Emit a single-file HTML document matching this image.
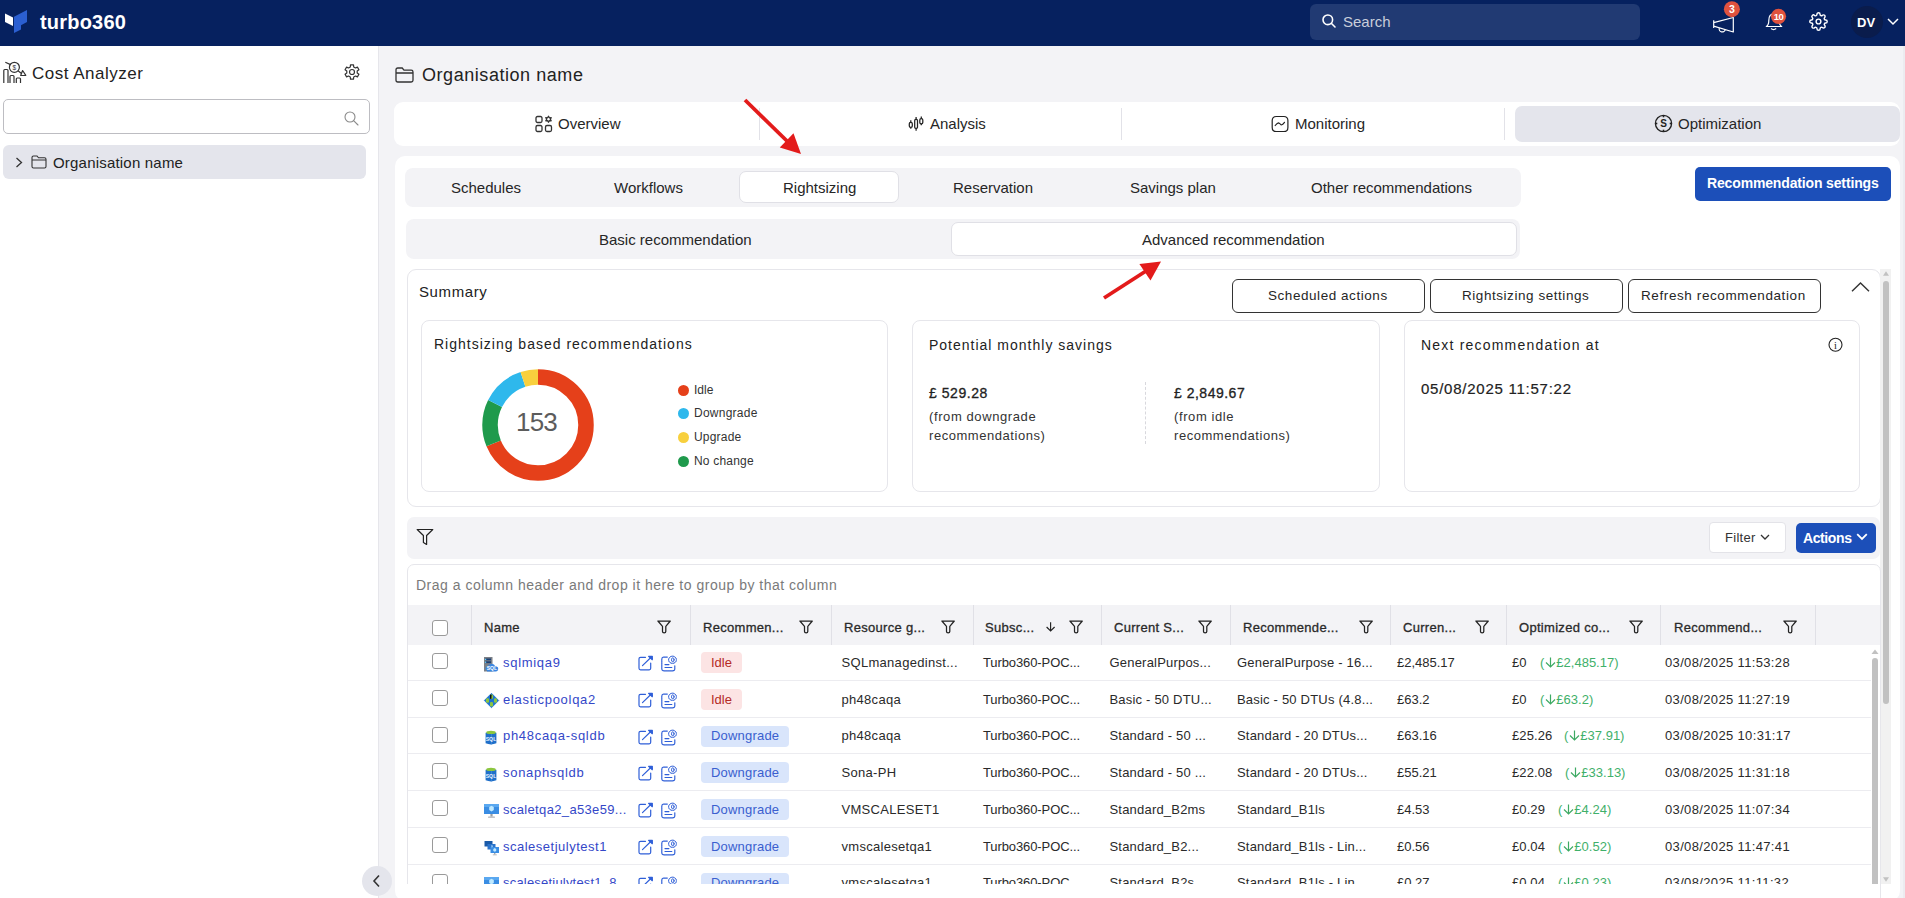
<!DOCTYPE html>
<html><head><meta charset="utf-8">
<style>
*{box-sizing:border-box;margin:0;padding:0}
html,body{width:1905px;height:898px;overflow:hidden}
body{font-family:"Liberation Sans",sans-serif;color:#262626;background:#f3f3f6;position:relative}
.a{position:absolute;white-space:nowrap}
.hdr{left:0;top:0;width:1905px;height:46px;background:#06215f}
.side{left:0;top:46px;width:379px;height:852px;background:#fff;border-right:1px solid #e6e6eb}
.tabs{left:394px;top:102px;width:1506px;height:44px;background:#fff;border-radius:9px}
.card{left:395px;top:156px;width:1505px;height:745px;background:#fff;border-radius:10px}
.sub{left:405px;top:168px;width:1116px;height:39px;background:#f3f3f6;border-radius:8px}
.t15{font-size:15px;line-height:18px}
.t14{font-size:14px;line-height:17px}
.t13{font-size:13px;line-height:16px}
.t12{font-size:12px;line-height:15px}
svg{position:absolute;overflow:visible}
.sb{-webkit-text-stroke:0.3px currentColor;letter-spacing:0.3px}
</style></head><body>

<!-- HEADER -->
<div class="a hdr"></div>
<svg style="left:5px;top:10px" width="23" height="24" viewBox="0 0 23 24">
 <polygon points="0,3.5 8,7.5 8,16 0,12" fill="#fff"/>
 <polygon points="9,8 22,0 22,14 16,18 16,23 9,27" fill="#2b5fd1" transform="scale(1,0.85)"/>
</svg>
<div class="a" style="left:40px;top:11px;font-size:20px;line-height:22px;font-weight:700;color:#fff;letter-spacing:0.2px">turbo360</div>

<div class="a" style="left:1310px;top:4px;width:330px;height:36px;background:#213a73;border-radius:6px"></div>
<svg style="left:1322px;top:14px" width="14" height="14" viewBox="0 0 14 14"><circle cx="5.8" cy="5.8" r="4.8" fill="none" stroke="#fff" stroke-width="1.6"/><line x1="9.3" y1="9.3" x2="13" y2="13" stroke="#fff" stroke-width="1.6" stroke-linecap="round"/></svg>
<div class="a t15" style="left:1343px;top:13px;color:#c9cedb">Search</div>

<!-- megaphone -->
<svg style="left:1700px;top:0" width="100" height="40" viewBox="0 0 100 40">
 <g fill="none" stroke="#fff" stroke-width="1.2" stroke-linejoin="round">
  <path d="M13.7 20.3 V27.9 M13.7 22.6 L33.3 17.5 V32 L13.7 26.2"/>
  <path d="M19.3 28 A3 3 0 0 0 25.3 29.6"/>
  <path d="M66.3 26.5 Q68.8 25 68.8 20.5 Q68.8 13.8 74 13.8 Q79.2 13.8 79.2 20.5 Q79.2 25 81.7 26.5 Z"/>
  <path d="M71 28.6 Q73.6 30.6 76.2 28.6"/>
 </g>
 <circle cx="31.9" cy="9.2" r="8" fill="#e0523e"/>
 <text x="31.9" y="13" font-size="10.5" font-weight="700" fill="#fff" text-anchor="middle" font-family="Liberation Sans">3</text>
 <circle cx="78.5" cy="16.3" r="7.6" fill="#e0523e"/>
 <text x="78.5" y="19.8" font-size="9.5" font-weight="700" fill="#fff" text-anchor="middle" font-family="Liberation Sans" letter-spacing="-0.6">10</text>
</svg>
<!-- gear -->
<svg style="left:1809px;top:12px" width="19" height="19" viewBox="0 0 24 24"><path fill="none" stroke="#fff" stroke-width="1.8" d="M12 15a3 3 0 1 0 0-6 3 3 0 0 0 0 6Z"/><path fill="none" stroke="#fff" stroke-width="1.8" d="M19.4 15a1.65 1.65 0 0 0 .33 1.82l.06.06a2 2 0 1 1-2.83 2.83l-.06-.06a1.65 1.65 0 0 0-1.82-.33 1.65 1.65 0 0 0-1 1.51V21a2 2 0 1 1-4 0v-.09A1.65 1.65 0 0 0 9 19.4a1.65 1.65 0 0 0-1.82.33l-.06.06a2 2 0 1 1-2.83-2.83l.06-.06A1.65 1.65 0 0 0 4.68 15a1.65 1.65 0 0 0-1.51-1H3a2 2 0 1 1 0-4h.09A1.65 1.65 0 0 0 4.6 9a1.65 1.65 0 0 0-.33-1.82l-.06-.06a2 2 0 1 1 2.83-2.83l.06.06A1.65 1.65 0 0 0 9 4.68a1.65 1.65 0 0 0 1-1.51V3a2 2 0 1 1 4 0v.09a1.65 1.65 0 0 0 1 1.51 1.65 1.65 0 0 0 1.82-.33l.06-.06a2 2 0 1 1 2.83 2.83l-.06.06A1.65 1.65 0 0 0 19.4 9a1.65 1.65 0 0 0 1.51 1H21a2 2 0 1 1 0 4h-.09a1.65 1.65 0 0 0-1.51 1Z"/></svg>
<div class="a" style="left:1851px;top:6px;width:32px;height:32px;border-radius:50%;background:#0a1c4c"></div>
<div class="a" style="left:1857px;top:15px;font-size:13px;line-height:15px;font-weight:700;color:#fff">DV</div>
<svg style="left:1887px;top:18px" width="12" height="7" viewBox="0 0 12 7"><polyline points="1,1 6,6 11,1" fill="none" stroke="#fff" stroke-width="1.5"/></svg>

<!-- SIDEBAR -->
<div class="a side"></div>
<!-- cost analyzer icon -->
<svg style="left:0;top:55px" width="30" height="35" viewBox="0 0 30 35">
 <g fill="none" stroke="#333" stroke-width="1.2">
  <path d="M3.8 28 V15.5 Q3.8 14.5 4.8 14.5 H7 Q8 14.5 8 15.5 V28"/>
  <path d="M10 28 V21.5 Q10 20.5 11 20.5 H13 Q14 20.5 14 21.5 V28"/>
  <path d="M16.3 28 V24 Q16.3 23 17.3 23 H19.5 Q20.5 23 20.5 24 V28"/>
  <circle cx="14.4" cy="12.3" r="5"/>
  <path d="M5.3 7.2 L10.6 9.6 M18 15.8 L21.5 18.5"/>
  <path d="M22.6 15.5 L25.8 20.3 L20.7 20.5 Z" stroke-linejoin="round"/>
 </g>
 <text x="14.4" y="14.6" font-size="6.5" text-anchor="middle" fill="#333" font-family="Liberation Sans">$</text>
</svg>
<div class="a" style="left:32px;top:64px;font-size:17px;line-height:20px;letter-spacing:0.5px;color:#222">Cost Analyzer</div>
<svg style="left:343.5px;top:64px" width="16" height="16" viewBox="0 0 16 16"><path d="M6.30 2.98 L6.48 0.86 L9.52 0.86 L9.70 2.98 L11.49 4.02 L13.42 3.12 L14.94 5.74 L13.20 6.97 L13.20 9.03 L14.94 10.26 L13.42 12.88 L11.49 11.98 L9.70 13.02 L9.52 15.14 L6.48 15.14 L6.30 13.02 L4.51 11.98 L2.58 12.88 L1.06 10.26 L2.80 9.03 L2.80 6.97 L1.06 5.74 L2.58 3.12 L4.51 4.02 Z" fill="none" stroke="#333" stroke-width="1.2" stroke-linejoin="round"/><circle cx="8" cy="8" r="2.5" fill="none" stroke="#333" stroke-width="1.2"/></svg>
<div class="a" style="left:3px;top:99px;width:367px;height:35px;border:1px solid #bdbdc2;border-radius:5px;background:#fff"></div>
<svg style="left:344px;top:111px" width="15" height="15" viewBox="0 0 15 15"><circle cx="6" cy="6" r="5" fill="none" stroke="#8a8a8a" stroke-width="1.1"/><line x1="9.6" y1="9.6" x2="14" y2="14" stroke="#8a8a8a" stroke-width="1.1" stroke-linecap="round"/></svg>
<div class="a" style="left:3px;top:145px;width:363px;height:34px;border-radius:6px;background:#e4e5ec"></div>
<svg style="left:15px;top:157px" width="8" height="11" viewBox="0 0 8 11"><polyline points="1.5,1 6.5,5.5 1.5,10" fill="none" stroke="#333" stroke-width="1.3"/></svg>
<svg style="left:31px;top:155px" width="16" height="14" viewBox="0 0 16 14"><path d="M1 2.5 Q1 1 2.5 1 H6 L7.5 2.8 H13.5 Q15 2.8 15 4.3 V11.5 Q15 13 13.5 13 H2.5 Q1 13 1 11.5 Z M1 5 H15" fill="none" stroke="#333" stroke-width="1.1"/></svg>
<div class="a" style="left:53px;top:154px;font-size:15px;line-height:17px;letter-spacing:0.2px;color:#222">Organisation name</div>
<!-- collapse button -->
<div class="a" style="left:362px;top:866px;width:30px;height:30px;border-radius:50%;background:#e4e5ec"></div>
<svg style="left:372px;top:874px" width="9" height="14" viewBox="0 0 9 14"><polyline points="7,1.5 2,7 7,12.5" fill="none" stroke="#333" stroke-width="1.6"/></svg>

<!-- MAIN -->
<svg style="left:395px;top:67px" width="19" height="16" viewBox="0 0 19 16"><path d="M1 2.8 Q1 1 2.8 1 H7.2 L9 3.2 H16.2 Q18 3.2 18 5 V13.2 Q18 15 16.2 15 H2.8 Q1 15 1 13.2 Z M1 6 H18" fill="none" stroke="#333" stroke-width="1.3"/></svg>
<div class="a" style="left:422px;top:65px;font-size:18px;line-height:20px;letter-spacing:0.55px;color:#222">Organisation name</div>

<div class="a tabs"></div>
<div class="a" style="left:759px;top:108px;width:1px;height:32px;background:#e2e2e8"></div>
<div class="a" style="left:1121px;top:108px;width:1px;height:32px;background:#e2e2e8"></div>
<div class="a" style="left:1504px;top:108px;width:1px;height:32px;background:#e2e2e8"></div>
<div class="a" style="left:1515px;top:106px;width:385px;height:36px;background:#e4e5ec;border-radius:7px"></div>
<!-- overview icon -->
<svg style="left:535px;top:115px" width="18" height="18" viewBox="0 0 18 18"><g fill="none" stroke="#333" stroke-width="1.3"><rect x="1" y="1.5" width="6" height="6" rx="1.5"/><rect x="1" y="10.5" width="6" height="6" rx="1.5"/><rect x="10.5" y="10.5" width="6" height="6" rx="1.5"/><path d="M13.5 1.2 L14.4 2.8 L16.2 2.6 L15.3 4.2 L16.2 5.8 L14.4 5.6 L13.5 7.2 L12.6 5.6 L10.8 5.8 L11.7 4.2 L10.8 2.6 L12.6 2.8 Z" stroke-linejoin="round"/></g></svg>
<div class="a t15" style="left:558px;top:115px;color:#262626">Overview</div>
<!-- analysis icon -->
<svg style="left:900px;top:108px" width="30" height="30" viewBox="0 0 30 30"><g fill="none" stroke="#222" stroke-width="1.25"><rect x="9.3" y="14.4" width="3" height="5" rx="1.4"/><path d="M10.8 12.2 V14.4 M10.8 19.4 V20.8"/><rect x="14.7" y="11.4" width="2.8" height="9" rx="1.1"/><path d="M16.1 9 V11.4 M16.1 20.4 V22.8"/><rect x="19.8" y="10.5" width="3" height="5.3" rx="1.4"/><path d="M21.3 8.4 V10.5 M21.3 15.8 V17.2"/></g></svg>
<div class="a t15" style="left:930px;top:115px;color:#262626">Analysis</div>
<!-- monitoring icon -->
<svg style="left:1271px;top:115px" width="18" height="18" viewBox="0 0 18 18"><g fill="none" stroke="#222" stroke-width="1.2" stroke-linecap="round" stroke-linejoin="round"><path d="M5.3 1.5 H12.8 Q16.9 1.5 16.9 5.6 V12.4 Q16.9 16.5 12.8 16.5 H5.3 Q1.2 16.5 1.2 12.4 V5.6 Q1.2 1.5 5.3 1.5 Z"/><path d="M4.2 10.5 Q6 8.2 7.4 7.9 Q8.6 8 10.2 10 Q11.8 9.6 13.5 7.3"/></g></svg>
<div class="a t15" style="left:1295px;top:115px;color:#262626">Monitoring</div>
<!-- optimization icon -->
<svg style="left:1653.5px;top:114.4px" width="19" height="19" viewBox="0 0 19 19"><circle cx="9.5" cy="9.5" r="8.1" fill="none" stroke="#222" stroke-width="1.35"/><g stroke="#222" stroke-width="1.6"><line x1="9.5" y1="1.5" x2="9.5" y2="3.3"/><line x1="9.5" y1="15.7" x2="9.5" y2="17.5"/><line x1="1.5" y1="9.5" x2="3.3" y2="9.5"/><line x1="15.7" y1="9.5" x2="17.5" y2="9.5"/></g><text x="9.5" y="13.4" font-size="10" font-weight="700" text-anchor="middle" fill="#222" font-family="Liberation Sans">S</text></svg>
<div class="a t15" style="left:1678px;top:115px;color:#262626">Optimization</div>

<div class="a card"></div>
<div class="a sub"></div>
<div class="a" style="left:739px;top:171px;width:160px;height:32px;background:#fff;border:1px solid #e0e0e6;border-radius:7px"></div>
<div class="a t15" style="left:451px;top:179px">Schedules</div>
<div class="a t15" style="left:614px;top:179px">Workflows</div>
<div class="a t15" style="left:783px;top:179px">Rightsizing</div>
<div class="a t15" style="left:953px;top:179px">Reservation</div>
<div class="a t15" style="left:1130px;top:179px">Savings plan</div>
<div class="a t15" style="left:1311px;top:179px">Other recommendations</div>

<div class="a" style="left:1695px;top:167px;width:196px;height:34px;background:#1c4fb9;border-radius:5px"></div>
<div class="a" style="left:1707px;top:175px;font-size:14px;line-height:17px;font-weight:700;color:#fff;letter-spacing:-0.15px">Recommendation settings</div>

<div class="a" style="left:406px;top:219px;width:1114px;height:40px;background:#f3f3f6;border-radius:8px"></div>
<div class="a" style="left:951px;top:222px;width:566px;height:34px;background:#fff;border:1px solid #e0e0e6;border-radius:7px"></div>
<div class="a t15" style="left:599px;top:231px">Basic recommendation</div>
<div class="a t15" style="left:1142px;top:231px">Advanced recommendation</div>


<!-- SUMMARY -->
<div class="a" style="left:407px;top:269px;width:1474px;height:238px;background:#fff;border:1px solid #e6e6eb;border-radius:9px"></div>
<div class="a" style="left:419px;top:283px;font-size:15px;line-height:18px;letter-spacing:0.6px;color:#222">Summary</div>
<div class="a" style="left:1232px;top:279px;width:193px;height:34px;border:1px solid #333;border-radius:6px;background:#fff"></div>
<div class="a" style="left:1430px;top:279px;width:193px;height:34px;border:1px solid #333;border-radius:6px;background:#fff"></div>
<div class="a" style="left:1628px;top:279px;width:193px;height:34px;border:1px solid #333;border-radius:6px;background:#fff"></div>
<div class="a" style="left:1268px;top:288px;font-size:13.5px;line-height:16px;letter-spacing:0.55px">Scheduled actions</div>
<div class="a" style="left:1462px;top:288px;font-size:13.5px;line-height:16px;letter-spacing:0.55px">Rightsizing settings</div>
<div class="a" style="left:1641px;top:288px;font-size:13.5px;line-height:16px;letter-spacing:0.6px">Refresh recommendation</div>
<svg style="left:1851px;top:282px" width="19" height="10" viewBox="0 0 19 10"><polyline points="1,9.2 9.5,1 18,9.2" fill="none" stroke="#333" stroke-width="1.4"/></svg>

<div class="a" style="left:421px;top:320px;width:467px;height:172px;border:1px solid #e6e6eb;border-radius:8px"></div>
<div class="a t14" style="left:434px;top:336px;letter-spacing:1px;color:#222">Rightsizing based recommendations</div>
<svg style="left:482px;top:369px" width="112" height="112" viewBox="0 0 112 112">
 <g transform="translate(56,56) rotate(-90)" fill="none" stroke-width="15.5">
  <circle r="48" stroke="#e5401a" stroke-dasharray="207.0 301.6" stroke-dashoffset="0"/>
  <circle r="48" stroke="#1f9a4c" stroke-dasharray="41.1 301.6" stroke-dashoffset="-207.0"/>
  <circle r="48" stroke="#2eb8ec" stroke-dasharray="37.7 301.6" stroke-dashoffset="-248.1"/>
  <circle r="48" stroke="#f8d03e" stroke-dasharray="15.8 301.6" stroke-dashoffset="-285.8"/>
 </g>
</svg>
<div class="a" style="left:516px;top:408px;font-size:26px;line-height:28px;color:#5c5c5c;letter-spacing:-0.8px">153</div>
<div class="a" style="left:678px;top:385px;width:11px;height:11px;border-radius:50%;background:#e5401a"></div>
<div class="a" style="left:678px;top:408px;width:11px;height:11px;border-radius:50%;background:#2eb8ec"></div>
<div class="a" style="left:678px;top:432px;width:11px;height:11px;border-radius:50%;background:#f8d03e"></div>
<div class="a" style="left:678px;top:456px;width:11px;height:11px;border-radius:50%;background:#1f9a4c"></div>
<div class="a t12" style="left:694px;top:383px;color:#333">Idle</div>
<div class="a t12" style="left:694px;top:406px;color:#333;letter-spacing:0.25px">Downgrade</div>
<div class="a t12" style="left:694px;top:430px;color:#333;letter-spacing:0.2px">Upgrade</div>
<div class="a t12" style="left:694px;top:454px;color:#333;letter-spacing:0.2px">No change</div>

<div class="a" style="left:912px;top:320px;width:468px;height:172px;border:1px solid #e6e6eb;border-radius:8px"></div>
<div class="a t14" style="left:929px;top:337px;letter-spacing:1px;color:#222">Potential monthly savings</div>
<div class="a" style="left:929px;top:385px;font-size:14px;line-height:16px;-webkit-text-stroke:0.3px #222;letter-spacing:0.55px;color:#222">£ 529.28</div>
<div class="a t13" style="left:929px;top:409px;letter-spacing:0.6px;color:#333">(from downgrade</div>
<div class="a t13" style="left:929px;top:428px;letter-spacing:0.55px;color:#333">recommendations)</div>
<div class="a" style="left:1145px;top:382px;width:0;height:62px;border-left:1px dashed #d8d8dd"></div>
<div class="a" style="left:1174px;top:385px;font-size:14px;line-height:16px;-webkit-text-stroke:0.3px #222;letter-spacing:0.5px;color:#222">£ 2,849.67</div>
<div class="a t13" style="left:1174px;top:409px;letter-spacing:0.6px;color:#333">(from idle</div>
<div class="a t13" style="left:1174px;top:428px;letter-spacing:0.55px;color:#333">recommendations)</div>

<div class="a" style="left:1404px;top:320px;width:456px;height:172px;border:1px solid #e6e6eb;border-radius:8px"></div>
<div class="a t14" style="left:1421px;top:337px;letter-spacing:1.2px;color:#222">Next recommendation at</div>
<svg style="left:1828px;top:338px" width="15" height="15" viewBox="0 0 15 15"><circle cx="7.5" cy="6.8" r="6.5" fill="none" stroke="#222" stroke-width="1.1"/><text x="7.5" y="10.6" font-size="10.5" text-anchor="middle" fill="#222" font-family="Liberation Serif">i</text></svg>
<div class="a" style="left:1421px;top:380px;font-size:15px;line-height:17px;-webkit-text-stroke:0.2px #222;letter-spacing:0.75px;color:#222">05/08/2025 11:57:22</div>

<!-- outer scrollbar -->
<div class="a" style="left:1880px;top:269px;width:11px;height:615px;background:#f1f1f1"></div>
<div class="a" style="left:1883px;top:281px;width:6px;height:423px;background:#c1c1c1;border-radius:3px"></div>
<svg style="left:1883px;top:271px" width="6" height="5" viewBox="0 0 6 5"><polygon points="3,0.3 6,4.7 0,4.7" fill="#c1c1c1"/></svg>
<svg style="left:1883px;top:877px" width="6" height="5" viewBox="0 0 6 5"><polygon points="0,0.3 6,0.3 3,4.7" fill="#c1c1c1"/></svg>
<div class="a" style="left:1903px;top:46px;width:2px;height:852px;background:#ececf0"></div>
<!-- TABLE -->
<div class="a" style="left:407px;top:517px;width:1473px;height:42px;background:#f3f3f6;border-radius:7px"></div>
<svg style="left:416px;top:528px" width="18" height="18" viewBox="0 0 18 18"><path d="M1.2 1.5 H16.8 L10.6 7.5 V16.5 L7.4 14.5 V7.5 Z" fill="none" stroke="#222" stroke-width="1.2" stroke-linejoin="round"/></svg>
<div class="a" style="left:1709px;top:522px;width:77px;height:31px;background:#fff;border:1px solid #e3e3e8;border-radius:4px"></div>
<div class="a t13" style="left:1725px;top:530px;color:#333;letter-spacing:0.3px">Filter</div>
<svg style="left:1760px;top:534px" width="10" height="7" viewBox="0 0 10 7"><polyline points="1,1 5,5 9,1" fill="none" stroke="#333" stroke-width="1.3"/></svg>
<div class="a" style="left:1796px;top:523px;width:80px;height:30px;background:#1c4fb9;border-radius:5px"></div>
<div class="a" style="left:1803px;top:530px;font-size:14px;line-height:16px;font-weight:700;color:#fff;letter-spacing:-0.4px">Actions</div>
<svg style="left:1856px;top:533px" width="12" height="8" viewBox="0 0 12 8"><polyline points="1.2,1.2 6,6 10.8,1.2" fill="none" stroke="#fff" stroke-width="1.8"/></svg>
<div class="a" style="left:407px;top:564px;width:1474px;height:340px;border:1px solid #e6e6eb;border-radius:7px;background:#fff;overflow:hidden">
<div class="a t14" style="left:8px;top:12px;color:#7a7a7a;letter-spacing:0.5px">Drag a column header and drop it here to group by that column</div>
</div>
<div class="a" style="left:408px;top:605px;width:1472px;height:40px;background:#f3f3f6"></div>
<div class="a" style="left:471px;top:605px;width:1px;height:40px;background:#e0e0e6"></div>
<div class="a" style="left:690px;top:605px;width:1px;height:40px;background:#e0e0e6"></div>
<div class="a" style="left:831px;top:605px;width:1px;height:40px;background:#e0e0e6"></div>
<div class="a" style="left:973px;top:605px;width:1px;height:40px;background:#e0e0e6"></div>
<div class="a" style="left:1101px;top:605px;width:1px;height:40px;background:#e0e0e6"></div>
<div class="a" style="left:1230px;top:605px;width:1px;height:40px;background:#e0e0e6"></div>
<div class="a" style="left:1390px;top:605px;width:1px;height:40px;background:#e0e0e6"></div>
<div class="a" style="left:1506px;top:605px;width:1px;height:40px;background:#e0e0e6"></div>
<div class="a" style="left:1660px;top:605px;width:1px;height:40px;background:#e0e0e6"></div>
<div class="a" style="left:1815px;top:605px;width:1px;height:40px;background:#e0e0e6"></div>
<div class="a" style="left:432px;top:620px;width:16px;height:16px;border:1px solid #9a9a9a;border-radius:3px;background:#fff"></div>
<div class="a sb" style="left:484px;top:620px;font-size:13px;line-height:16px;color:#2a2a2a">Name</div>
<svg style="left:657px;top:620px" width="14" height="14" viewBox="0 0 14 14"><path d="M0.9 1 H13.3 L8.8 6.4 V11.6 Q8.8 12.9 7.15 12.9 Q5.5 12.9 5.5 11.6 V6.4 Z" fill="none" stroke="#222" stroke-width="1.25" stroke-linejoin="round"/></svg>
<div class="a sb" style="left:703px;top:620px;font-size:13px;line-height:16px;color:#2a2a2a">Recommen...</div>
<svg style="left:799px;top:620px" width="14" height="14" viewBox="0 0 14 14"><path d="M0.9 1 H13.3 L8.8 6.4 V11.6 Q8.8 12.9 7.15 12.9 Q5.5 12.9 5.5 11.6 V6.4 Z" fill="none" stroke="#222" stroke-width="1.25" stroke-linejoin="round"/></svg>
<div class="a sb" style="left:844px;top:620px;font-size:13px;line-height:16px;color:#2a2a2a">Resource g...</div>
<svg style="left:941px;top:620px" width="14" height="14" viewBox="0 0 14 14"><path d="M0.9 1 H13.3 L8.8 6.4 V11.6 Q8.8 12.9 7.15 12.9 Q5.5 12.9 5.5 11.6 V6.4 Z" fill="none" stroke="#222" stroke-width="1.25" stroke-linejoin="round"/></svg>
<div class="a sb" style="left:985px;top:620px;font-size:13px;line-height:16px;color:#2a2a2a">Subsc...</div>
<svg style="left:1069px;top:620px" width="14" height="14" viewBox="0 0 14 14"><path d="M0.9 1 H13.3 L8.8 6.4 V11.6 Q8.8 12.9 7.15 12.9 Q5.5 12.9 5.5 11.6 V6.4 Z" fill="none" stroke="#222" stroke-width="1.25" stroke-linejoin="round"/></svg>
<div class="a sb" style="left:1114px;top:620px;font-size:13px;line-height:16px;color:#2a2a2a">Current S...</div>
<svg style="left:1198px;top:620px" width="14" height="14" viewBox="0 0 14 14"><path d="M0.9 1 H13.3 L8.8 6.4 V11.6 Q8.8 12.9 7.15 12.9 Q5.5 12.9 5.5 11.6 V6.4 Z" fill="none" stroke="#222" stroke-width="1.25" stroke-linejoin="round"/></svg>
<div class="a sb" style="left:1243px;top:620px;font-size:13px;line-height:16px;color:#2a2a2a">Recommende...</div>
<svg style="left:1359px;top:620px" width="14" height="14" viewBox="0 0 14 14"><path d="M0.9 1 H13.3 L8.8 6.4 V11.6 Q8.8 12.9 7.15 12.9 Q5.5 12.9 5.5 11.6 V6.4 Z" fill="none" stroke="#222" stroke-width="1.25" stroke-linejoin="round"/></svg>
<div class="a sb" style="left:1403px;top:620px;font-size:13px;line-height:16px;color:#2a2a2a">Curren...</div>
<svg style="left:1475px;top:620px" width="14" height="14" viewBox="0 0 14 14"><path d="M0.9 1 H13.3 L8.8 6.4 V11.6 Q8.8 12.9 7.15 12.9 Q5.5 12.9 5.5 11.6 V6.4 Z" fill="none" stroke="#222" stroke-width="1.25" stroke-linejoin="round"/></svg>
<div class="a sb" style="left:1519px;top:620px;font-size:13px;line-height:16px;color:#2a2a2a">Optimized co...</div>
<svg style="left:1629px;top:620px" width="14" height="14" viewBox="0 0 14 14"><path d="M0.9 1 H13.3 L8.8 6.4 V11.6 Q8.8 12.9 7.15 12.9 Q5.5 12.9 5.5 11.6 V6.4 Z" fill="none" stroke="#222" stroke-width="1.25" stroke-linejoin="round"/></svg>
<div class="a sb" style="left:1674px;top:620px;font-size:13px;line-height:16px;color:#2a2a2a">Recommend...</div>
<svg style="left:1783px;top:620px" width="14" height="14" viewBox="0 0 14 14"><path d="M0.9 1 H13.3 L8.8 6.4 V11.6 Q8.8 12.9 7.15 12.9 Q5.5 12.9 5.5 11.6 V6.4 Z" fill="none" stroke="#222" stroke-width="1.25" stroke-linejoin="round"/></svg>
<svg style="left:1046px;top:622px" width="10" height="10" viewBox="0 0 10 10"><path d="M4.6 0.3 V9 M0.6 5 L4.6 9 L8.6 5" fill="none" stroke="#222" stroke-width="1.15"/></svg>
<div class="a" style="left:408px;top:645px;width:1463px;height:239px;overflow:hidden">
<div class="a" style="left:0;top:-0.9px;width:1463px;height:36.8px;border-bottom:1px solid #ececf0"></div>
<div class="a" style="left:24px;top:8.1px;width:16px;height:16px;border:1px solid #9a9a9a;border-radius:3px;background:#fff"></div>
<svg style="left:76px;top:11.6px" width="15" height="15" viewBox="0 0 15 15"><rect x="0" y="0" width="8.5" height="14.5" fill="#7b8087"/><rect x="1.5" y="1.5" width="5.5" height="1.8" fill="#1d3f73"/><rect x="1.5" y="4.3" width="5.5" height="1.8" fill="#1d3f73"/><circle cx="1.6" cy="2.4" r="0.7" fill="#5fd0ff"/><circle cx="1.6" cy="5.2" r="0.7" fill="#5fd0ff"/><path d="M3 13.5 Q1.5 13.5 1.5 11.6 Q1.5 9.6 3.6 9.4 Q4.6 6.8 7.6 6.8 Q10.6 6.8 11.2 9.3 Q14.2 9.5 14.2 11.6 Q14.2 14.5 11.8 14.5 H3 Z" fill="#3a86e0"/><text x="7.8" y="13.3" font-size="5" font-weight="700" fill="#fff" text-anchor="middle" font-family="Liberation Sans">SQL</text></svg>
<div class="a t13" style="left:95px;top:9.7px;color:#3447c8;letter-spacing:0.7px">sqlmiqa9</div>
<svg style="left:226px;top:7.1px" width="46" height="23" viewBox="0 0 46 23"><g fill="none" stroke="#2f5fd8" stroke-width="1.2" stroke-linecap="round" stroke-linejoin="round"><path d="M11.5 5.3 H6.5 Q5 5.3 5 6.8 V16.3 Q5 17.8 6.5 17.8 H15.2 Q16.7 17.8 16.7 16.3 V11.1"/><path d="M8.5 13.6 L17.6 4.8"/><path d="M14.6 4.3 H18.3 V7.7 Z" fill="#2f5fd8"/><path d="M33.3 5.1 H30 Q27.8 5.1 27.8 7.3 V16.6 Q27.8 18.8 30 18.8 H38.6 Q40.8 18.8 40.8 16.6 V13.8" stroke-dasharray="1.6 0.5"/><path d="M31 12.6 H34.9 M31 15.5 H37.8"/><ellipse cx="38.5" cy="7.8" rx="3.9" ry="3.6" stroke-width="1" stroke-dasharray="1.2 0.5"/><ellipse cx="38.8" cy="7.8" rx="1.3" ry="2" stroke-width="1"/></g></svg>
<div class="a" style="left:293px;top:7.1px;width:41px;height:21px;background:#fce4e4;border-radius:4px"></div>
<div class="a t13" style="left:303px;top:9.7px;color:#b52a25">Idle</div>
<div class="a t13" style="left:433.5px;top:9.7px;color:#2a2a2a;letter-spacing:0.3px">SQLmanagedinst...</div>
<div class="a t13" style="left:575.0px;top:9.7px;color:#2a2a2a;letter-spacing:-0.1px">Turbo360-POC...</div>
<div class="a t13" style="left:701.5px;top:9.7px;color:#2a2a2a;letter-spacing:0.2px">GeneralPurpos...</div>
<div class="a t13" style="left:829.0px;top:9.7px;color:#2a2a2a;letter-spacing:0.2px">GeneralPurpose - 16...</div>
<div class="a t13" style="left:989.0px;top:9.7px;color:#2a2a2a;letter-spacing:0px">£2,485.17</div>
<div class="a t13" style="left:1104.0px;top:9.7px;color:#2a2a2a;letter-spacing:0.1px">£0</div>
<div class="a t13" style="left:1257.0px;top:9.7px;color:#2a2a2a;letter-spacing:0.35px">03/08/2025 11:53:28</div>
<div class="a t13" style="left:1132px;top:9.7px;color:#3fb06a;letter-spacing:0px">(<svg style="position:relative;display:inline-block;vertical-align:-1px;margin:0 0.5px" width="11" height="11" viewBox="0 0 11 11"><path d="M5.5 0.5 V10 M1 5.5 L5.5 10 L10 5.5" fill="none" stroke="#3daa63" stroke-width="1.2"/></svg>£2,485.17)</div>
<div class="a" style="left:0;top:35.9px;width:1463px;height:36.8px;border-bottom:1px solid #ececf0"></div>
<div class="a" style="left:24px;top:44.9px;width:16px;height:16px;border:1px solid #9a9a9a;border-radius:3px;background:#fff"></div>
<svg style="left:76px;top:48.4px" width="15" height="15" viewBox="0 0 15 15"><polygon points="7.5,0.3 14.7,7.5 7.5,14.7 0.3,7.5" fill="#1f74cf" stroke="#1f74cf" stroke-width="0.8" stroke-linejoin="round"/><rect x="6" y="1.6" width="3" height="4.4" rx="1.2" fill="#8cc63f"/><rect x="6" y="1.6" width="1.5" height="4.4" rx="0.7" fill="#111"/><rect x="2" y="5.3" width="3" height="4.4" rx="1.2" fill="#8cc63f"/><rect x="10" y="5.3" width="3" height="4.4" rx="1.2" fill="#8cc63f"/><rect x="6" y="9.1" width="3" height="4.4" rx="1.2" fill="#8cc63f"/></svg>
<div class="a t13" style="left:95px;top:46.5px;color:#3447c8;letter-spacing:0.7px">elasticpoolqa2</div>
<svg style="left:226px;top:43.9px" width="46" height="23" viewBox="0 0 46 23"><g fill="none" stroke="#2f5fd8" stroke-width="1.2" stroke-linecap="round" stroke-linejoin="round"><path d="M11.5 5.3 H6.5 Q5 5.3 5 6.8 V16.3 Q5 17.8 6.5 17.8 H15.2 Q16.7 17.8 16.7 16.3 V11.1"/><path d="M8.5 13.6 L17.6 4.8"/><path d="M14.6 4.3 H18.3 V7.7 Z" fill="#2f5fd8"/><path d="M33.3 5.1 H30 Q27.8 5.1 27.8 7.3 V16.6 Q27.8 18.8 30 18.8 H38.6 Q40.8 18.8 40.8 16.6 V13.8" stroke-dasharray="1.6 0.5"/><path d="M31 12.6 H34.9 M31 15.5 H37.8"/><ellipse cx="38.5" cy="7.8" rx="3.9" ry="3.6" stroke-width="1" stroke-dasharray="1.2 0.5"/><ellipse cx="38.8" cy="7.8" rx="1.3" ry="2" stroke-width="1"/></g></svg>
<div class="a" style="left:293px;top:43.9px;width:41px;height:21px;background:#fce4e4;border-radius:4px"></div>
<div class="a t13" style="left:303px;top:46.5px;color:#b52a25">Idle</div>
<div class="a t13" style="left:433.5px;top:46.5px;color:#2a2a2a;letter-spacing:0.3px">ph48caqa</div>
<div class="a t13" style="left:575.0px;top:46.5px;color:#2a2a2a;letter-spacing:-0.1px">Turbo360-POC...</div>
<div class="a t13" style="left:701.5px;top:46.5px;color:#2a2a2a;letter-spacing:0.2px">Basic - 50 DTU...</div>
<div class="a t13" style="left:829.0px;top:46.5px;color:#2a2a2a;letter-spacing:0.2px">Basic - 50 DTUs (4.8...</div>
<div class="a t13" style="left:989.0px;top:46.5px;color:#2a2a2a;letter-spacing:0px">£63.2</div>
<div class="a t13" style="left:1104.0px;top:46.5px;color:#2a2a2a;letter-spacing:0.1px">£0</div>
<div class="a t13" style="left:1257.0px;top:46.5px;color:#2a2a2a;letter-spacing:0.35px">03/08/2025 11:27:19</div>
<div class="a t13" style="left:1132px;top:46.5px;color:#3fb06a;letter-spacing:0px">(<svg style="position:relative;display:inline-block;vertical-align:-1px;margin:0 0.5px" width="11" height="11" viewBox="0 0 11 11"><path d="M5.5 0.5 V10 M1 5.5 L5.5 10 L10 5.5" fill="none" stroke="#3daa63" stroke-width="1.2"/></svg>£63.2)</div>
<div class="a" style="left:0;top:72.7px;width:1463px;height:36.8px;border-bottom:1px solid #ececf0"></div>
<div class="a" style="left:24px;top:81.7px;width:16px;height:16px;border:1px solid #9a9a9a;border-radius:3px;background:#fff"></div>
<svg style="left:76px;top:85.2px" width="15" height="15" viewBox="0 0 15 15"><path d="M1.6 2.8 V13.3 Q7 15.6 12.4 13.3 V2.8 Z" fill="#1f6fc9"/><rect x="7" y="3" width="0.6" height="11.5" fill="#4b92dc"/><ellipse cx="7" cy="2.4" rx="4.8" ry="1.6" fill="#8cc63f"/><text x="7" y="10.5" font-size="5.2" font-weight="700" fill="#e8f2ff" text-anchor="middle" font-family="Liberation Sans">SQL</text></svg>
<div class="a t13" style="left:95px;top:83.3px;color:#3447c8;letter-spacing:0.7px">ph48caqa-sqldb</div>
<svg style="left:226px;top:80.7px" width="46" height="23" viewBox="0 0 46 23"><g fill="none" stroke="#2f5fd8" stroke-width="1.2" stroke-linecap="round" stroke-linejoin="round"><path d="M11.5 5.3 H6.5 Q5 5.3 5 6.8 V16.3 Q5 17.8 6.5 17.8 H15.2 Q16.7 17.8 16.7 16.3 V11.1"/><path d="M8.5 13.6 L17.6 4.8"/><path d="M14.6 4.3 H18.3 V7.7 Z" fill="#2f5fd8"/><path d="M33.3 5.1 H30 Q27.8 5.1 27.8 7.3 V16.6 Q27.8 18.8 30 18.8 H38.6 Q40.8 18.8 40.8 16.6 V13.8" stroke-dasharray="1.6 0.5"/><path d="M31 12.6 H34.9 M31 15.5 H37.8"/><ellipse cx="38.5" cy="7.8" rx="3.9" ry="3.6" stroke-width="1" stroke-dasharray="1.2 0.5"/><ellipse cx="38.8" cy="7.8" rx="1.3" ry="2" stroke-width="1"/></g></svg>
<div class="a" style="left:293px;top:80.7px;width:88px;height:21px;background:#d9e5fb;border-radius:4px"></div>
<div class="a t13" style="left:303px;top:83.3px;color:#3b5fcf;letter-spacing:0.2px">Downgrade</div>
<div class="a t13" style="left:433.5px;top:83.3px;color:#2a2a2a;letter-spacing:0.3px">ph48caqa</div>
<div class="a t13" style="left:575.0px;top:83.3px;color:#2a2a2a;letter-spacing:-0.1px">Turbo360-POC...</div>
<div class="a t13" style="left:701.5px;top:83.3px;color:#2a2a2a;letter-spacing:0.2px">Standard - 50 ...</div>
<div class="a t13" style="left:829.0px;top:83.3px;color:#2a2a2a;letter-spacing:0.2px">Standard - 20 DTUs...</div>
<div class="a t13" style="left:989.0px;top:83.3px;color:#2a2a2a;letter-spacing:0px">£63.16</div>
<div class="a t13" style="left:1104.0px;top:83.3px;color:#2a2a2a;letter-spacing:0.1px">£25.26</div>
<div class="a t13" style="left:1257.0px;top:83.3px;color:#2a2a2a;letter-spacing:0.35px">03/08/2025 10:31:17</div>
<div class="a t13" style="left:1156px;top:83.3px;color:#3fb06a;letter-spacing:0px">(<svg style="position:relative;display:inline-block;vertical-align:-1px;margin:0 0.5px" width="11" height="11" viewBox="0 0 11 11"><path d="M5.5 0.5 V10 M1 5.5 L5.5 10 L10 5.5" fill="none" stroke="#3daa63" stroke-width="1.2"/></svg>£37.91)</div>
<div class="a" style="left:0;top:109.4px;width:1463px;height:36.8px;border-bottom:1px solid #ececf0"></div>
<div class="a" style="left:24px;top:118.4px;width:16px;height:16px;border:1px solid #9a9a9a;border-radius:3px;background:#fff"></div>
<svg style="left:76px;top:121.9px" width="15" height="15" viewBox="0 0 15 15"><path d="M1.6 2.8 V13.3 Q7 15.6 12.4 13.3 V2.8 Z" fill="#1f6fc9"/><rect x="7" y="3" width="0.6" height="11.5" fill="#4b92dc"/><ellipse cx="7" cy="2.4" rx="4.8" ry="1.6" fill="#8cc63f"/><text x="7" y="10.5" font-size="5.2" font-weight="700" fill="#e8f2ff" text-anchor="middle" font-family="Liberation Sans">SQL</text></svg>
<div class="a t13" style="left:95px;top:120.0px;color:#3447c8;letter-spacing:0.7px">sonaphsqldb</div>
<svg style="left:226px;top:117.4px" width="46" height="23" viewBox="0 0 46 23"><g fill="none" stroke="#2f5fd8" stroke-width="1.2" stroke-linecap="round" stroke-linejoin="round"><path d="M11.5 5.3 H6.5 Q5 5.3 5 6.8 V16.3 Q5 17.8 6.5 17.8 H15.2 Q16.7 17.8 16.7 16.3 V11.1"/><path d="M8.5 13.6 L17.6 4.8"/><path d="M14.6 4.3 H18.3 V7.7 Z" fill="#2f5fd8"/><path d="M33.3 5.1 H30 Q27.8 5.1 27.8 7.3 V16.6 Q27.8 18.8 30 18.8 H38.6 Q40.8 18.8 40.8 16.6 V13.8" stroke-dasharray="1.6 0.5"/><path d="M31 12.6 H34.9 M31 15.5 H37.8"/><ellipse cx="38.5" cy="7.8" rx="3.9" ry="3.6" stroke-width="1" stroke-dasharray="1.2 0.5"/><ellipse cx="38.8" cy="7.8" rx="1.3" ry="2" stroke-width="1"/></g></svg>
<div class="a" style="left:293px;top:117.4px;width:88px;height:21px;background:#d9e5fb;border-radius:4px"></div>
<div class="a t13" style="left:303px;top:120.0px;color:#3b5fcf;letter-spacing:0.2px">Downgrade</div>
<div class="a t13" style="left:433.5px;top:120.0px;color:#2a2a2a;letter-spacing:0.3px">Sona-PH</div>
<div class="a t13" style="left:575.0px;top:120.0px;color:#2a2a2a;letter-spacing:-0.1px">Turbo360-POC...</div>
<div class="a t13" style="left:701.5px;top:120.0px;color:#2a2a2a;letter-spacing:0.2px">Standard - 50 ...</div>
<div class="a t13" style="left:829.0px;top:120.0px;color:#2a2a2a;letter-spacing:0.2px">Standard - 20 DTUs...</div>
<div class="a t13" style="left:989.0px;top:120.0px;color:#2a2a2a;letter-spacing:0px">£55.21</div>
<div class="a t13" style="left:1104.0px;top:120.0px;color:#2a2a2a;letter-spacing:0.1px">£22.08</div>
<div class="a t13" style="left:1257.0px;top:120.0px;color:#2a2a2a;letter-spacing:0.35px">03/08/2025 11:31:18</div>
<div class="a t13" style="left:1157px;top:120.0px;color:#3fb06a;letter-spacing:0px">(<svg style="position:relative;display:inline-block;vertical-align:-1px;margin:0 0.5px" width="11" height="11" viewBox="0 0 11 11"><path d="M5.5 0.5 V10 M1 5.5 L5.5 10 L10 5.5" fill="none" stroke="#3daa63" stroke-width="1.2"/></svg>£33.13)</div>
<div class="a" style="left:0;top:146.2px;width:1463px;height:36.8px;border-bottom:1px solid #ececf0"></div>
<div class="a" style="left:24px;top:155.2px;width:16px;height:16px;border:1px solid #9a9a9a;border-radius:3px;background:#fff"></div>
<svg style="left:76px;top:158.7px" width="15" height="15" viewBox="0 0 15 15"><rect x="0" y="0" width="15" height="10" fill="#3a8de3"/><rect x="0" y="0" width="15" height="3" fill="#5aa8f0"/><polygon points="7.5,1.8 9.8,3.1 9.8,6.1 7.5,7.4 5.2,6.1 5.2,3.1" fill="#bfe9ff"/><rect x="6.4" y="10" width="2.2" height="2.6" fill="#9a9ea3"/><rect x="4" y="12.6" width="7" height="1.2" rx="0.6" fill="#b0b3b8"/></svg>
<div class="a t13" style="left:95px;top:156.8px;color:#3447c8;letter-spacing:0.35px">scaletqa2_a53e59...</div>
<svg style="left:226px;top:154.2px" width="46" height="23" viewBox="0 0 46 23"><g fill="none" stroke="#2f5fd8" stroke-width="1.2" stroke-linecap="round" stroke-linejoin="round"><path d="M11.5 5.3 H6.5 Q5 5.3 5 6.8 V16.3 Q5 17.8 6.5 17.8 H15.2 Q16.7 17.8 16.7 16.3 V11.1"/><path d="M8.5 13.6 L17.6 4.8"/><path d="M14.6 4.3 H18.3 V7.7 Z" fill="#2f5fd8"/><path d="M33.3 5.1 H30 Q27.8 5.1 27.8 7.3 V16.6 Q27.8 18.8 30 18.8 H38.6 Q40.8 18.8 40.8 16.6 V13.8" stroke-dasharray="1.6 0.5"/><path d="M31 12.6 H34.9 M31 15.5 H37.8"/><ellipse cx="38.5" cy="7.8" rx="3.9" ry="3.6" stroke-width="1" stroke-dasharray="1.2 0.5"/><ellipse cx="38.8" cy="7.8" rx="1.3" ry="2" stroke-width="1"/></g></svg>
<div class="a" style="left:293px;top:154.2px;width:88px;height:21px;background:#d9e5fb;border-radius:4px"></div>
<div class="a t13" style="left:303px;top:156.8px;color:#3b5fcf;letter-spacing:0.2px">Downgrade</div>
<div class="a t13" style="left:433.5px;top:156.8px;color:#2a2a2a;letter-spacing:0.3px">VMSCALESET1</div>
<div class="a t13" style="left:575.0px;top:156.8px;color:#2a2a2a;letter-spacing:-0.1px">Turbo360-POC...</div>
<div class="a t13" style="left:701.5px;top:156.8px;color:#2a2a2a;letter-spacing:0.2px">Standard_B2ms</div>
<div class="a t13" style="left:829.0px;top:156.8px;color:#2a2a2a;letter-spacing:0.2px">Standard_B1ls</div>
<div class="a t13" style="left:989.0px;top:156.8px;color:#2a2a2a;letter-spacing:0px">£4.53</div>
<div class="a t13" style="left:1104.0px;top:156.8px;color:#2a2a2a;letter-spacing:0.1px">£0.29</div>
<div class="a t13" style="left:1257.0px;top:156.8px;color:#2a2a2a;letter-spacing:0.35px">03/08/2025 11:07:34</div>
<div class="a t13" style="left:1150px;top:156.8px;color:#3fb06a;letter-spacing:0px">(<svg style="position:relative;display:inline-block;vertical-align:-1px;margin:0 0.5px" width="11" height="11" viewBox="0 0 11 11"><path d="M5.5 0.5 V10 M1 5.5 L5.5 10 L10 5.5" fill="none" stroke="#3daa63" stroke-width="1.2"/></svg>£4.24)</div>
<div class="a" style="left:0;top:183.0px;width:1463px;height:36.8px;border-bottom:1px solid #ececf0"></div>
<div class="a" style="left:24px;top:192.0px;width:16px;height:16px;border:1px solid #9a9a9a;border-radius:3px;background:#fff"></div>
<svg style="left:76px;top:195.5px" width="15" height="15" viewBox="0 0 15 15"><rect x="0.5" y="0" width="8" height="5.5" fill="#1a5aa8"/><rect x="3.5" y="3" width="8" height="5.5" fill="#2a73cc"/><rect x="6.5" y="6" width="8.5" height="6" fill="#3a8de3"/><polygon points="10.75,7 12.2,7.9 12.2,9.9 10.75,10.8 9.3,9.9 9.3,7.9" fill="#bfe9ff"/><polygon points="7.5,4 8.6,4.6 8.6,6 7.5,6.6" fill="#bfe9ff"/><rect x="10.1" y="12" width="1.3" height="1.5" fill="#9a9ea3"/><rect x="8.8" y="13.4" width="4" height="0.9" fill="#b0b3b8"/></svg>
<div class="a t13" style="left:95px;top:193.6px;color:#3447c8;letter-spacing:0.5px">scalesetjulytest1</div>
<svg style="left:226px;top:191.0px" width="46" height="23" viewBox="0 0 46 23"><g fill="none" stroke="#2f5fd8" stroke-width="1.2" stroke-linecap="round" stroke-linejoin="round"><path d="M11.5 5.3 H6.5 Q5 5.3 5 6.8 V16.3 Q5 17.8 6.5 17.8 H15.2 Q16.7 17.8 16.7 16.3 V11.1"/><path d="M8.5 13.6 L17.6 4.8"/><path d="M14.6 4.3 H18.3 V7.7 Z" fill="#2f5fd8"/><path d="M33.3 5.1 H30 Q27.8 5.1 27.8 7.3 V16.6 Q27.8 18.8 30 18.8 H38.6 Q40.8 18.8 40.8 16.6 V13.8" stroke-dasharray="1.6 0.5"/><path d="M31 12.6 H34.9 M31 15.5 H37.8"/><ellipse cx="38.5" cy="7.8" rx="3.9" ry="3.6" stroke-width="1" stroke-dasharray="1.2 0.5"/><ellipse cx="38.8" cy="7.8" rx="1.3" ry="2" stroke-width="1"/></g></svg>
<div class="a" style="left:293px;top:191.0px;width:88px;height:21px;background:#d9e5fb;border-radius:4px"></div>
<div class="a t13" style="left:303px;top:193.6px;color:#3b5fcf;letter-spacing:0.2px">Downgrade</div>
<div class="a t13" style="left:433.5px;top:193.6px;color:#2a2a2a;letter-spacing:0.3px">vmscalesetqa1</div>
<div class="a t13" style="left:575.0px;top:193.6px;color:#2a2a2a;letter-spacing:-0.1px">Turbo360-POC...</div>
<div class="a t13" style="left:701.5px;top:193.6px;color:#2a2a2a;letter-spacing:0.2px">Standard_B2...</div>
<div class="a t13" style="left:829.0px;top:193.6px;color:#2a2a2a;letter-spacing:0.2px">Standard_B1ls - Lin...</div>
<div class="a t13" style="left:989.0px;top:193.6px;color:#2a2a2a;letter-spacing:0px">£0.56</div>
<div class="a t13" style="left:1104.0px;top:193.6px;color:#2a2a2a;letter-spacing:0.1px">£0.04</div>
<div class="a t13" style="left:1257.0px;top:193.6px;color:#2a2a2a;letter-spacing:0.35px">03/08/2025 11:47:41</div>
<div class="a t13" style="left:1150px;top:193.6px;color:#3fb06a;letter-spacing:0px">(<svg style="position:relative;display:inline-block;vertical-align:-1px;margin:0 0.5px" width="11" height="11" viewBox="0 0 11 11"><path d="M5.5 0.5 V10 M1 5.5 L5.5 10 L10 5.5" fill="none" stroke="#3daa63" stroke-width="1.2"/></svg>£0.52)</div>
<div class="a" style="left:0;top:219.8px;width:1463px;height:36.8px;border-bottom:1px solid #ececf0"></div>
<div class="a" style="left:24px;top:228.8px;width:16px;height:16px;border:1px solid #9a9a9a;border-radius:3px;background:#fff"></div>
<svg style="left:76px;top:232.3px" width="15" height="15" viewBox="0 0 15 15"><rect x="0" y="0" width="15" height="10" fill="#3a8de3"/><rect x="0" y="0" width="15" height="3" fill="#5aa8f0"/><polygon points="7.5,1.8 9.8,3.1 9.8,6.1 7.5,7.4 5.2,6.1 5.2,3.1" fill="#bfe9ff"/><rect x="6.4" y="10" width="2.2" height="2.6" fill="#9a9ea3"/><rect x="4" y="12.6" width="7" height="1.2" rx="0.6" fill="#b0b3b8"/></svg>
<div class="a t13" style="left:95px;top:230.4px;color:#3447c8;letter-spacing:0.2px">scalesetjulytest1_8...</div>
<svg style="left:226px;top:227.8px" width="46" height="23" viewBox="0 0 46 23"><g fill="none" stroke="#2f5fd8" stroke-width="1.2" stroke-linecap="round" stroke-linejoin="round"><path d="M11.5 5.3 H6.5 Q5 5.3 5 6.8 V16.3 Q5 17.8 6.5 17.8 H15.2 Q16.7 17.8 16.7 16.3 V11.1"/><path d="M8.5 13.6 L17.6 4.8"/><path d="M14.6 4.3 H18.3 V7.7 Z" fill="#2f5fd8"/><path d="M33.3 5.1 H30 Q27.8 5.1 27.8 7.3 V16.6 Q27.8 18.8 30 18.8 H38.6 Q40.8 18.8 40.8 16.6 V13.8" stroke-dasharray="1.6 0.5"/><path d="M31 12.6 H34.9 M31 15.5 H37.8"/><ellipse cx="38.5" cy="7.8" rx="3.9" ry="3.6" stroke-width="1" stroke-dasharray="1.2 0.5"/><ellipse cx="38.8" cy="7.8" rx="1.3" ry="2" stroke-width="1"/></g></svg>
<div class="a" style="left:293px;top:227.8px;width:88px;height:21px;background:#d9e5fb;border-radius:4px"></div>
<div class="a t13" style="left:303px;top:230.4px;color:#3b5fcf;letter-spacing:0.2px">Downgrade</div>
<div class="a t13" style="left:433.5px;top:230.4px;color:#2a2a2a;letter-spacing:0.3px">vmscalesetqa1</div>
<div class="a t13" style="left:575.0px;top:230.4px;color:#2a2a2a;letter-spacing:-0.1px">Turbo360-POC...</div>
<div class="a t13" style="left:701.5px;top:230.4px;color:#2a2a2a;letter-spacing:0.2px">Standard_B2s</div>
<div class="a t13" style="left:829.0px;top:230.4px;color:#2a2a2a;letter-spacing:0.2px">Standard_B1ls - Lin...</div>
<div class="a t13" style="left:989.0px;top:230.4px;color:#2a2a2a;letter-spacing:0px">£0.27</div>
<div class="a t13" style="left:1104.0px;top:230.4px;color:#2a2a2a;letter-spacing:0.1px">£0.04</div>
<div class="a t13" style="left:1257.0px;top:230.4px;color:#2a2a2a;letter-spacing:0.35px">03/08/2025 11:11:32</div>
<div class="a t13" style="left:1150px;top:230.4px;color:#3fb06a;letter-spacing:0px">(<svg style="position:relative;display:inline-block;vertical-align:-1px;margin:0 0.5px" width="11" height="11" viewBox="0 0 11 11"><path d="M5.5 0.5 V10 M1 5.5 L5.5 10 L10 5.5" fill="none" stroke="#3daa63" stroke-width="1.2"/></svg>£0.23)</div>
</div>
<div class="a" style="left:1871px;top:645px;width:9px;height:239px;background:#fff"></div>
<div class="a" style="left:1872px;top:658px;width:6px;height:236px;background:#c1c1c1;border-radius:3px"></div>
<svg style="left:1871px;top:649px" width="8" height="6" viewBox="0 0 8 6"><polygon points="4,0.5 7.5,5 0.5,5" fill="#c1c1c1"/></svg>
<div class="a" style="left:405px;top:884px;width:1475px;height:14px;background:#fff"></div>
<!-- red arrows -->
<svg style="left:0;top:0" width="1905" height="898" viewBox="0 0 1905 898">
 <line x1="745" y1="100" x2="787" y2="141" stroke="#e31b1b" stroke-width="3.8"/>
 <polygon points="801,154 779.8,147.5 793.5,133.3" fill="#e31b1b"/>
 <line x1="1104" y1="298" x2="1146" y2="271" stroke="#e31b1b" stroke-width="3.8"/>
 <polygon points="1161,261.4 1139.4,264 1150.5,280.4" fill="#e31b1b"/>
</svg>
</body></html>
